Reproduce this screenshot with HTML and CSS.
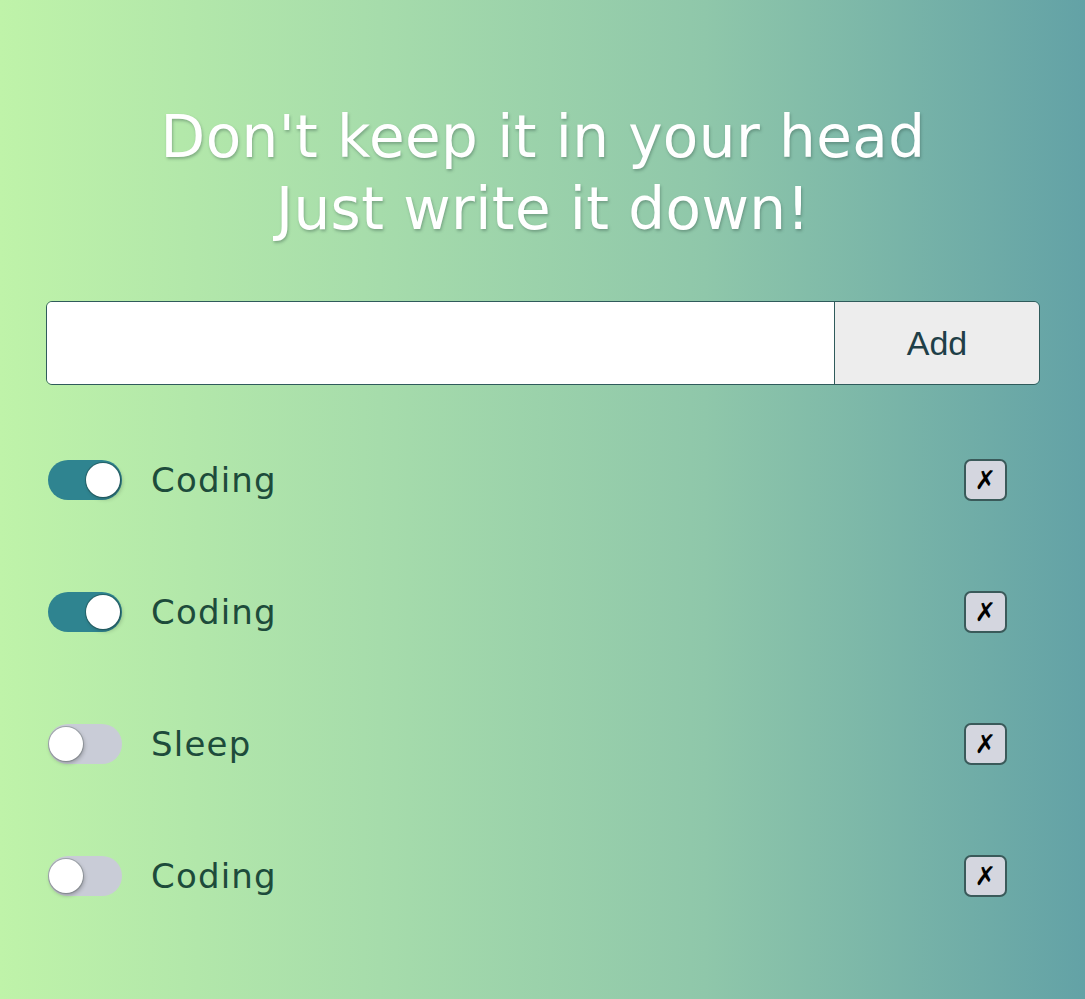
FILE: index.html
```html
<!DOCTYPE html>
<html lang="en">
<head>
<meta charset="utf-8">
<title>Todo</title>
<link rel="stylesheet" href="styles.css">
</head>
<body>
<main class="app">
  <h1 class="title">Don't keep it in your head<br>Just write it down!</h1>
  <form class="add-form">
    <input class="add-input" type="text" aria-label="New task">
    <button class="add-btn" type="button">Add</button>
  </form>
  <ul class="list">
    <li class="item">
      <span class="toggle on"><span class="knob"></span></span>
      <span class="label">Coding</span>
      <button class="del" type="button">✗</button>
    </li>
    <li class="item">
      <span class="toggle on"><span class="knob"></span></span>
      <span class="label">Coding</span>
      <button class="del" type="button">✗</button>
    </li>
    <li class="item">
      <span class="toggle"><span class="knob"></span></span>
      <span class="label">Sleep</span>
      <button class="del" type="button">✗</button>
    </li>
    <li class="item">
      <span class="toggle"><span class="knob"></span></span>
      <span class="label">Coding</span>
      <button class="del" type="button">✗</button>
    </li>
  </ul>
</main>
</body>
</html>
```
FILE: styles.css
```css
html, body {
  margin: 0;
  height: 100%;
}
body {
  background: linear-gradient(90deg, #bff3a9 0%, #a6dcab 35%, #8fc7aa 65%, #63a2a6 100%);
  font-family: "DejaVu Sans", "Open Sans", sans-serif;
  min-height: 999px;
}
.app {
  padding: 101px 45px 0 46px;
}
.title {
  margin: 0;
  text-align: center;
  color: #ffffff;
  font-weight: 400;
  font-size: 58px;
  line-height: 72px;
  letter-spacing: 0.4px;
  text-shadow: 1px 2px 3px rgba(40, 70, 60, 0.35);
}
.add-form {
  display: flex;
  margin-top: 56px;
  height: 84px;
  border: 1px solid #2f5b5b;
  border-radius: 6px;
  overflow: hidden;
  box-sizing: border-box;
}
.add-input {
  flex: 1;
  border: none;
  margin: 0;
  padding: 0 16px;
  background: #ffffff;
  outline: none;
}
.add-btn {
  width: 205px;
  border: none;
  border-left: 1px solid #2f5b5b;
  margin: 0;
  background: #ededed;
  color: #1f3f48;
  font-family: "Liberation Sans", Arial, sans-serif;
  font-size: 34px;
}
.list {
  list-style: none;
  margin: 29px 0 0;
  padding: 0 33px 0 2px;
}
.item {
  display: flex;
  align-items: center;
  height: 132px;
}
.toggle {
  position: relative;
  width: 74px;
  height: 40px;
  border-radius: 20px;
  background: #c9ccd7;
  flex: none;
}
.toggle.on {
  background: #2f8490;
}
.knob {
  position: absolute;
  top: 3px;
  left: 1px;
  width: 34px;
  height: 34px;
  border-radius: 50%;
  background: #ffffff;
  box-shadow: 0 0 0 1px rgba(90, 100, 100, 0.35), 1px 2px 4px rgba(0, 0, 0, 0.3);
}
.toggle.on .knob {
  left: auto;
  right: 2px;
  box-shadow: 0 0 0 1px rgba(30, 70, 70, 0.5), 2px 2px 4px rgba(0, 0, 0, 0.25);
}
.label {
  flex: 1;
  margin-left: 29px;
  color: #1d4b3b;
  font-size: 34px;
  letter-spacing: 1.2px;
}
.del {
  width: 43px;
  height: 42px;
  padding: 0;
  border: 2px solid #3a5a5a;
  border-radius: 7px;
  background: #d4d6df;
  color: #000000;
  font-family: "DejaVu Sans", sans-serif;
  font-size: 26px;
  font-weight: 700;
  line-height: 1;
}
```
